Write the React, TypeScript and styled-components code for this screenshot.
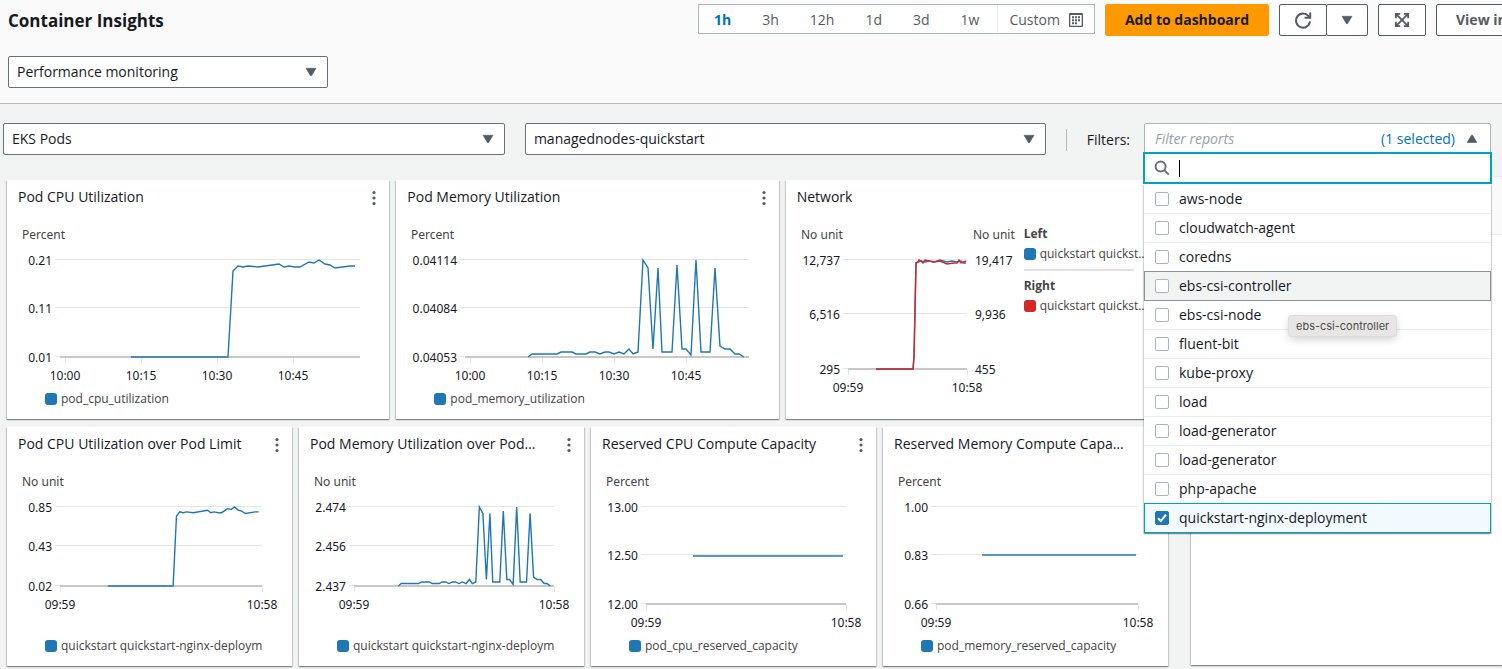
import React, { useState } from 'react';
import styled, { createGlobalStyle, css } from 'styled-components';

const color = {
  text: '#16191f',
  muted: '#545b64',
  border: '#687078',
  lightBorder: '#aab7b8',
  divider: '#eaeded',
  page: '#f2f3f3',
  header: '#fafafa',
  link: '#0073bb',
  orange: '#ff9900',
  focus: '#00a1c9',
  chartBlue: '#1f77b4',
  chartRed: '#d62728',
};

const GlobalStyle = createGlobalStyle`
  *, *::before, *::after { box-sizing: border-box; }
  body {
    margin: 0;
    background: ${color.page};
    color: ${color.text};
    font: 14px/22px "Open Sans", "Noto Sans", sans-serif;
  }
  button, input, select { font: inherit; color: inherit; }
`;

const Page = styled.div`
  min-height: 100vh;
  overflow: hidden;
`;

/* ---------- header ---------- */

const Header = styled.header`
  display: flex;
  flex-direction: column;
  gap: 18px;
  padding: 4px 0 15px 8px;
  background: ${color.header};
  border-bottom: 1px solid #b6babb;
`;

const HeaderRow = styled.div`
  display: flex;
  align-items: flex-start;
  justify-content: space-between;
`;

const Title = styled.h1`
  margin: 0;
  font-size: 17px;
  line-height: 34px;
  font-weight: 700;
`;

const Toolbar = styled.div`
  display: flex;
  align-items: flex-start;
  gap: 10px;
`;

const TimeRange = styled.div`
  display: flex;
  height: 30px;
  background: #fff;
  border: 1px solid ${color.lightBorder};
`;

const Presets = styled.div`
  display: flex;
  gap: 31px;
  padding: 0 18px 0 15px;
`;

const PlainButton = styled.button<{ $active?: boolean }>`
  display: flex;
  align-items: center;
  gap: 9px;
  padding: 2px 0 0;
  border: 0;
  background: none;
  white-space: nowrap;
  color: ${p => (p.$active ? color.link : color.muted)};
  font-weight: ${p => (p.$active ? 700 : 400)};
  cursor: pointer;
`;

const CustomRange = styled.div`
  display: flex;
  padding: 0 11px;
  border-left: 1px solid ${color.divider};
`;

const Button = styled.button<{ $primary?: boolean; $icon?: boolean }>`
  display: flex;
  flex: none;
  align-items: center;
  justify-content: center;
  height: 32px;
  padding: 0 ${p => (p.$icon ? '16px' : '19px')};
  border: 1px solid ${p => (p.$primary ? color.orange : color.muted)};
  border-radius: 2px;
  background: ${p => (p.$primary ? color.orange : '#fff')};
  color: ${p => (p.$primary ? color.text : color.muted)};
  font-weight: 700;
  white-space: nowrap;
  cursor: pointer;
`;

const ButtonPair = styled.div`
  display: flex;
  ${Button} { padding: 0; }
  ${Button}:first-child { width: 48px; }
  ${Button}:last-child { width: 42px; margin-left: -1px; }
`;

const ClippedEnd = styled.div`
  display: flex;
  width: 66px;
  overflow: hidden;
`;

/* ---------- selects ---------- */

const SelectBox = styled.div<{ $width: number; $grow?: boolean }>`
  display: grid;
  align-items: center;
  ${p => (p.$grow ? css`flex: ${p.$width} 1 0;` : css`width: ${p.$width}px;`)}
  min-width: 0;
  > * { grid-area: 1 / 1; }
  > svg { justify-self: end; margin-right: 11px; pointer-events: none; }
`;

const NativeSelect = styled.select`
  appearance: none;
  width: 100%;
  height: 32px;
  padding: 0 32px 0 8px;
  border: 1px solid ${color.border};
  border-radius: 2px;
  background: #fff;
`;

const FilterBar = styled.div`
  display: flex;
  align-items: flex-start;
  gap: 20px;
  padding: 19px 11px 0 3px;
`;

const FilterGroup = styled.div`
  display: flex;
  flex: none;
  align-items: flex-start;
  gap: 14px;
`;

const FilterLabel = styled.label`
  margin-top: 6px;
  padding-left: 20px;
  border-left: 1px solid #b6babb;
`;

const MultiSelect = styled.div`
  position: relative;
  width: 347px;
`;

const Trigger = styled.button`
  display: flex;
  align-items: center;
  width: 100%;
  height: 31px;
  padding: 0 12px 0 10px;
  border: 1px solid ${color.lightBorder};
  border-radius: 2px 2px 0 0;
  background: #fff;
  text-align: left;
`;

const Placeholder = styled.span`
  flex: 1;
  color: #95a3a5;
  font-style: italic;
`;

const SelectedCount = styled.span`
  margin-right: 11px;
  color: ${color.link};
`;

const Menu = styled.div`
  position: absolute;
  z-index: 2;
  top: 29px;
  left: -1px;
  right: -1px;
`;

const SearchField = styled.label`
  display: flex;
  align-items: center;
  height: 32px;
  padding: 0 9px;
  border: 2px solid ${color.focus};
  background: #fff;
`;

const TextCursor = styled.span`
  width: 1px;
  height: 17px;
  margin-left: 9px;
  background: #000;
`;

const SearchInput = styled.input`
  flex: 1;
  min-width: 0;
  padding: 0;
  border: 0;
  outline: 0;
  background: none;
`;

const Options = styled.ul`
  margin: 0 1px;
  padding: 0;
  list-style: none;
  background: #fff;
  box-shadow: 0 1px 1px rgba(0, 28, 36, 0.3), 1px 1px 1px rgba(0, 28, 36, 0.15),
    -1px 1px 1px rgba(0, 28, 36, 0.15);
`;

const Option = styled.li<{ $state?: 'hover' | 'selected' }>`
  position: relative;
  height: 30px;
  border: 1px solid transparent;
  border-bottom-color: ${color.divider};
  & + & { margin-top: -1px; }
  ${p => p.$state === 'hover' && css`
    z-index: 1;
    border-color: #879596;
    background: ${color.page};
  `}
  ${p => p.$state === 'selected' && css`
    z-index: 1;
    border-color: ${color.focus};
    background: #f1faff;
  `}
`;

const OptionLabel = styled.label`
  display: flex;
  align-items: center;
  gap: 10px;
  height: 28px;
  padding-left: 10px;
`;

const CheckCell = styled.span`
  display: grid;
  > * { grid-area: 1 / 1; }
  > svg { pointer-events: none; opacity: 0; }
  > input:checked + svg { opacity: 1; }
`;

const Check = styled.input`
  appearance: none;
  width: 14px;
  height: 14px;
  margin: 0;
  border: 1px solid ${color.lightBorder};
  border-radius: 2px;
  background: #fff;
  &:checked { border-color: ${color.chartBlue}; background: ${color.chartBlue}; }
`;

const Tooltip = styled.div`
  position: absolute;
  z-index: 2;
  top: 164px;
  left: 146px;
  padding: 0 7px;
  border-radius: 3px;
  background: #e7e6e5;
  box-shadow: 0 0 0 1px #dcdcdb, 0 3px 8px rgba(0, 0, 0, 0.2);
  color: #4c4c4c;
  font: 11px/20px Inter, sans-serif;
  white-space: nowrap;
`;

/* ---------- dashboard ---------- */

const Main = styled.main`
  display: grid;
  grid-template-columns: minmax(0, 1fr) 311px;
  gap: 23px;
  padding: 21px 0 3px;
`;

const Cards = styled.div`
  display: grid;
  grid-template-columns: repeat(12, minmax(0, 1fr));
  gap: 8px 7px;
  padding: 4px 0 0 7px;
`;

const surface = css`
  background: #fff;
  box-shadow: 0 1px 1px rgba(0, 28, 36, 0.3), 1px 1px 1px rgba(0, 28, 36, 0.15),
    -1px 1px 1px rgba(0, 28, 36, 0.15);
`;

const Card = styled.section<{ $span: number }>`
  ${surface}
  display: flex;
  flex-direction: column;
  grid-column: span ${p => p.$span};
  min-height: 239px;
`;

const CardHeader = styled.div`
  display: flex;
  align-items: flex-start;
  gap: 24px;
  height: 36px;
  padding: 6px 12px 0 11px;
`;

const CardTitle = styled.h2`
  flex: 1;
  margin: 0;
  overflow: hidden;
  font-size: 14px;
  line-height: 22px;
  font-weight: 400;
  text-overflow: ellipsis;
  white-space: nowrap;
`;

const MenuButton = styled.button`
  display: flex;
  padding: 4px 1px;
  border: 0;
  background: none;
`;

const CardBody = styled.div`
  display: flex;
  flex: 1;
`;

const ChartSvg = styled.svg<{ $width?: number }>`
  display: block;
  flex: ${p => (p.$width ? `0 0 ${p.$width}px` : '1')};
  min-width: 0;
  height: 170px;
  overflow: visible;
  font-family: "Noto Sans", "Open Sans", sans-serif;
  font-size: 12px;
`;

const Legend = styled.div`
  display: flex;
  align-items: center;
  gap: 4px;
  margin: 0 30px 11px 38px;
  overflow: hidden;
`;

const Swatch = styled.span<{ $color: string }>`
  flex: none;
  width: 12px;
  height: 12px;
  border-radius: 3px;
  background: ${p => p.$color};
`;

const LegendText = styled.span<{ $ellipsis?: boolean }>`
  min-width: 0;
  overflow: hidden;
  color: #444;
  font-size: 12px;
  line-height: 18px;
  white-space: nowrap;
  text-overflow: ${p => (p.$ellipsis ? 'ellipsis' : 'clip')};
`;

const SideLegend = styled.div`
  display: flex;
  flex: none;
  flex-direction: column;
  gap: 2px;
  width: 124px;
  padding-top: 9px;
`;

const SideLegendGroup = styled.div`
  display: flex;
  flex-direction: column;
  gap: 2px;
  color: #444;
  font-size: 12px;
  line-height: 18px;
  & + & {
    margin-top: 4px;
  }
  & + &::before {
    content: '';
    width: 110px;
    height: 2px;
    margin-bottom: 4px;
    background: #e2e2e2;
  }
`;

const SideLegendItem = styled.div`
  display: flex;
  align-items: center;
  gap: 4px;
`;

const SidePanel = styled.aside`
  ${surface}
  margin-bottom: 1px;
`;

const SidePanelHeader = styled.div`
  height: 59px;
  background: ${color.header};
  border-top: 1px solid ${color.divider};
  border-bottom: 1px solid ${color.divider};
`;

/* ---------- icons ---------- */

const Caret = ({ up = false }: { up?: boolean }) => (
  <svg width="12" height="12" viewBox="0 0 12 12" aria-hidden="true">
    <path
      d={up ? 'M1 9.5h10L6.6 2.4a.7.7 0 0 0-1.2 0z' : 'M1 2.3h10L6.6 9.6a.7.7 0 0 1-1.2 0z'}
      fill={color.muted}
      stroke={color.muted}
      strokeLinejoin="round"
      strokeWidth=".6"
    />
  </svg>
);

const CalendarIcon = () => (
  <svg width="14" height="14" viewBox="0 0 14 14" aria-hidden="true">
    <path
      fill={color.muted}
      fillRule="evenodd"
      d="M1 0h12a1 1 0 0 1 1 1v12a1 1 0 0 1-1 1H1a1 1 0 0 1-1-1V1a1 1 0 0 1 1-1zM1.3 2v10.7h11.4V2z"
    />
    <path
      fill={color.muted}
      d="M6 3.3h2v2H6zM9 3.3h2v2H9zM3 3.3h2v2H3zM3 6.3h2v2H3zM6 6.3h2v2H6zM9 6.3h2v2H9zM3 9.3h2v2H3zM6 9.3h2v2H6z"
    />
  </svg>
);

const RefreshIcon = () => (
  <svg width="18" height="18" viewBox="0 0 18 18" aria-hidden="true" fill="none" stroke={color.muted} strokeWidth="2">
    <path d="M16 10.4A7 7 0 1 1 14.5 5.2L16 6.6" />
    <path d="M16.2 1.4v5.4h-5.6" />
  </svg>
);

const ExpandIcon = () => (
  <svg width="14" height="14" viewBox="0 0 14 14" aria-hidden="true" fill={color.muted}>
    <path d="M0 0h5.2v1.8H3.1L7 5.7l3.9-3.9H8.8V0H14v5.2h-1.8V3.1L8.3 7l3.9 3.9V8.8H14V14H8.8v-1.8h2.1L7 8.3l-3.9 3.9h2.1V14H0V8.8h1.8v2.1L5.7 7 1.8 3.1v2.1H0z" />
  </svg>
);

const SearchIcon = () => (
  <svg width="16" height="16" viewBox="0 0 16 16" aria-hidden="true" fill="none" stroke={color.border} strokeWidth="2">
    <circle cx="6.6" cy="6.6" r="5" />
    <path d="M10.4 10.4l4.4 4.2" />
  </svg>
);

const KebabIcon = () => (
  <svg width="4" height="16" viewBox="0 0 4 16" aria-hidden="true" fill={color.muted}>
    <circle cx="2" cy="2.5" r="1.6" />
    <circle cx="2" cy="8" r="1.6" />
    <circle cx="2" cy="13.5" r="1.6" />
  </svg>
);

const CheckMark = () => (
  <svg width="14" height="14" viewBox="0 0 14 14" aria-hidden="true" fill="none" stroke="#fff" strokeWidth="2">
    <path d="M3 7.2l2.9 2.9L11 3.6" />
  </svg>
);

/* ---------- charts ---------- */

type Series = { color: string; domain: [number, number]; points: [number, number][] };

type ChartSpec = {
  unit: string;
  left: number;
  width: number;
  height: number;
  labels: string[];
  ticks: [number, string][];
  series: Series[];
  right?: { unit: string; labels: string[] };
};

const cpu: Series = {
  color: color.chartBlue,
  domain: [300, 97],
  points: [
    [71, 97], [168, 97], [173, 11], [178, 6], [183, 7], [188, 6], [198, 7], [219, 4], [224, 7],
    [229, 6], [235, 7], [240, 7], [249, 2], [254, 3], [259, 0], [265, 4], [270, 5], [275, 8],
    [290, 6], [295, 6],
  ],
};

const memory: Series = {
  color: color.chartBlue,
  domain: [284, 97],
  points: [
    [63, 97], [67, 94], [92, 94], [96, 92], [107, 92], [111, 94], [121, 94], [125, 92], [130, 92],
    [135, 94], [140, 92], [144, 92], [149, 94], [154, 92], [159, 94], [164, 89], [168, 94],
    [173, 92], [178, 0], [183, 8], [188, 89], [193, 8], [197, 92], [207, 92], [212, 5], [217, 89],
    [221, 89], [226, 95], [231, 0], [236, 92], [245, 92], [250, 8], [255, 86], [260, 89],
    [265, 89], [270, 94], [274, 94], [279, 97],
  ],
};

const networkRx: Series = {
  color: color.chartBlue,
  domain: [119, 109],
  points: [
    [28, 109], [65, 109], [66, 97], [68, 3], [70, 2], [73, 1], [77, 2], [81, 1], [86, 2], [92, 0],
    [99, 2], [104, 1], [109, 2], [113, 1], [115, 3], [118, 3],
  ],
};

const networkTx: Series = {
  color: color.chartRed,
  domain: [119, 109],
  points: [
    [28, 109], [65, 109], [66, 97], [68, 3], [70, 2], [71, 0], [73, 1], [75, 3], [77, 0], [81, 1],
    [86, 2], [92, 1], [99, 4], [106, 3], [109, 3], [111, 0], [113, 3], [118, 1],
  ],
};

const flat = (from: number, to: number, y: number, domain: [number, number]): Series => ({
  color: color.chartBlue,
  domain,
  points: [[from, y], [to, y]],
});

const TOP = 44;

const Chart = ({ spec, svgWidth }: { spec: ChartSpec; svgWidth?: number }) => {
  const { left, width, height } = spec;
  const bottom = TOP + height;
  const rows = [TOP, TOP + Math.floor(height / 2), bottom];
  return (
    <ChartSvg $width={svgWidth} role="img" aria-label={`${spec.unit} over time`}>
      <text x="15" y="23" fill="#444">{spec.unit}</text>
      <g stroke="#e6e6e6" shapeRendering="crispEdges">
        {rows.map(y => (
          <line key={y} x1={left - 5} x2={left + width} y1={y - 0.5} y2={y - 0.5} />
        ))}
        {spec.ticks.map(([x]) => (
          <line key={x} x1={left + x + 0.5} x2={left + x + 0.5} y1={bottom} y2={bottom + 6} />
        ))}
      </g>
      <rect x={left} y={bottom - 1} width={width} height="2" fill="#c8c8c8" shapeRendering="crispEdges" />
      <g fill={color.text}>
        {spec.labels.map((label, i) => (
          <text key={label} x={left - 8} y={rows[i] + 5} textAnchor="end">{label}</text>
        ))}
        {spec.ticks.map(([x, label]) => (
          <text key={label} x={left + x} y={bottom + 23} textAnchor="middle">{label}</text>
        ))}
        {spec.right?.labels.map((label, i) => (
          <text key={label} x={left + width + 8} y={rows[i] + 5}>{label}</text>
        ))}
      </g>
      {spec.right && (
        <text x={left + width + 6} y="23" fill="#444">{spec.right.unit}</text>
      )}
      {spec.series.map((s, i) => (
        <polyline
          key={i}
          fill="none"
          stroke={s.color}
          strokeWidth="1.4"
          points={s.points
            .map(([x, y]) => [left + (x / s.domain[0]) * width, TOP + (y / s.domain[1]) * height].join(','))
            .join(' ')}
        />
      ))}
    </ChartSvg>
  );
};

const hour = (width: number): [number, string][] => [[0, '09:59'], [width, '10:58']];

type Widget = { title: string; span: number; legend?: string; spec: ChartSpec };

const widgets: Widget[] = [
  {
    title: 'Pod CPU Utilization',
    span: 4,
    legend: 'pod_cpu_utilization',
    spec: {
      unit: 'Percent', left: 53, width: 300, height: 97,
      labels: ['0.21', '0.11', '0.01'],
      ticks: [[5, '10:00'], [81, '10:15'], [157, '10:30'], [233, '10:45']],
      series: [cpu],
    },
  },
  {
    title: 'Pod Memory Utilization',
    span: 4,
    legend: 'pod_memory_utilization',
    spec: {
      unit: 'Percent', left: 69, width: 284, height: 97,
      labels: ['0.04114', '0.04084', '0.04053'],
      ticks: [[5, '10:00'], [77, '10:15'], [149, '10:30'], [221, '10:45']],
      series: [memory],
    },
  },
  {
    title: 'Network',
    span: 4,
    spec: {
      unit: 'No unit', left: 62, width: 119, height: 109,
      labels: ['12,737', '6,516', '295'],
      ticks: hour(119),
      series: [networkRx, networkTx],
      right: { unit: 'No unit', labels: ['19,417', '9,936', '455'] },
    },
  },
  {
    title: 'Pod CPU Utilization over Pod Limit',
    span: 3,
    legend: 'quickstart quickstart-nginx-deployment',
    spec: {
      unit: 'No unit', left: 53, width: 202, height: 79,
      labels: ['0.85', '0.43', '0.02'],
      ticks: hour(202),
      series: [cpu],
    },
  },
  {
    title: 'Pod Memory Utilization over Pod…',
    span: 3,
    legend: 'quickstart quickstart-nginx-deployment',
    spec: {
      unit: 'No unit', left: 55, width: 200, height: 79,
      labels: ['2.474', '2.456', '2.437'],
      ticks: hour(200),
      series: [memory],
    },
  },
  {
    title: 'Reserved CPU Compute Capacity',
    span: 3,
    legend: 'pod_cpu_reserved_capacity',
    spec: {
      unit: 'Percent', left: 55, width: 200, height: 97,
      labels: ['13.00', '12.50', '12.00'],
      ticks: hour(200),
      series: [flat(47, 197, 49, [200, 97])],
    },
  },
  {
    title: 'Reserved Memory Compute Capacity',
    span: 3,
    legend: 'pod_memory_reserved_capacity',
    spec: {
      unit: 'Percent', left: 53, width: 202, height: 97,
      labels: ['1.00', '0.83', '0.66'],
      ticks: hour(202),
      series: [flat(46, 200, 48, [202, 97])],
    },
  },
];

const WidgetCard = ({ widget }: { widget: Widget }) => (
  <Card $span={widget.span}>
    <CardHeader>
      <CardTitle>{widget.title}</CardTitle>
      <MenuButton type="button" aria-label="Widget actions"><KebabIcon /></MenuButton>
    </CardHeader>
    <CardBody>
      <Chart spec={widget.spec} svgWidth={widget.legend ? undefined : 238} />
      {!widget.legend && (
        <SideLegend>
          {[['Left', color.chartBlue], ['Right', color.chartRed]].map(([side, swatch]) => (
            <SideLegendGroup key={side}>
              <strong>{side}</strong>
              <SideLegendItem>
                <Swatch $color={swatch} />
                <LegendText $ellipsis>quickstart quickstart-nginx-deployment</LegendText>
              </SideLegendItem>
            </SideLegendGroup>
          ))}
        </SideLegend>
      )}
    </CardBody>
    {widget.legend && (
      <Legend>
        <Swatch $color={color.chartBlue} />
        <LegendText>{widget.legend}</LegendText>
      </Legend>
    )}
  </Card>
);

const reports = [
  'aws-node', 'cloudwatch-agent', 'coredns', 'ebs-csi-controller', 'ebs-csi-node', 'fluent-bit',
  'kube-proxy', 'load', 'load-generator', 'load-generator', 'php-apache',
  'quickstart-nginx-deployment',
];

const ReportFilter = () => {
  const [checked, setChecked] = useState<number[]>([11]);
  const toggle = (i: number) =>
    setChecked(list => (list.includes(i) ? list.filter(n => n !== i) : [...list, i]));
  return (
    <MultiSelect>
      <Trigger id="report-filter" type="button" aria-expanded="true">
        <Placeholder>Filter reports</Placeholder>
        <SelectedCount>({checked.length} selected)</SelectedCount>
        <Caret up />
      </Trigger>
      <Menu>
        <SearchField>
          <SearchIcon />
          <TextCursor />
          <SearchInput type="text" aria-label="Search reports" />
        </SearchField>
        <Options>
          {reports.map((name, i) => (
            <Option key={i} $state={checked.includes(i) ? 'selected' : i === 3 ? 'hover' : undefined}>
              <OptionLabel>
                <CheckCell>
                  <Check type="checkbox" checked={checked.includes(i)} onChange={() => toggle(i)} />
                  <CheckMark />
                </CheckCell>
                {name}
              </OptionLabel>
            </Option>
          ))}
        </Options>
        <Tooltip role="tooltip">ebs-csi-controller</Tooltip>
      </Menu>
    </MultiSelect>
  );
};

const Select = ({ label, value, width, grow }: { label: string; value: string; width: number; grow?: boolean }) => (
  <SelectBox $width={width} $grow={grow}>
    <NativeSelect aria-label={label} defaultValue={value}>
      <option>{value}</option>
    </NativeSelect>
    <Caret />
  </SelectBox>
);

export default function App() {
  const [range, setRange] = useState('1h');
  return (
    <Page>
      <GlobalStyle />
      <Header>
        <HeaderRow>
          <Title>Container Insights</Title>
          <Toolbar>
            <TimeRange>
              <Presets>
                {['1h', '3h', '12h', '1d', '3d', '1w'].map(r => (
                  <PlainButton key={r} type="button" $active={r === range} onClick={() => setRange(r)}>
                    {r}
                  </PlainButton>
                ))}
              </Presets>
              <CustomRange>
                <PlainButton type="button">Custom <CalendarIcon /></PlainButton>
              </CustomRange>
            </TimeRange>
            <Button type="button" $primary>Add to dashboard</Button>
            <ButtonPair>
              <Button type="button" $icon aria-label="Refresh"><RefreshIcon /></Button>
              <Button type="button" $icon aria-label="Refresh options"><Caret /></Button>
            </ButtonPair>
            <Button type="button" $icon aria-label="Full screen"><ExpandIcon /></Button>
            <ClippedEnd>
              <Button type="button">View in maps</Button>
            </ClippedEnd>
          </Toolbar>
        </HeaderRow>
        <Select label="View" value="Performance monitoring" width={320} />
      </Header>
      <FilterBar>
        <Select label="Resource type" value="EKS Pods" width={502} grow />
        <Select label="Cluster" value="managednodes-quickstart" width={521} grow />
        <FilterGroup>
          <FilterLabel htmlFor="report-filter">Filters:</FilterLabel>
          <ReportFilter />
        </FilterGroup>
      </FilterBar>
      <Main>
        <Cards>
          {widgets.map(w => <WidgetCard key={w.title} widget={w} />)}
        </Cards>
        <SidePanel>
          <SidePanelHeader />
        </SidePanel>
      </Main>
    </Page>
  );
}
